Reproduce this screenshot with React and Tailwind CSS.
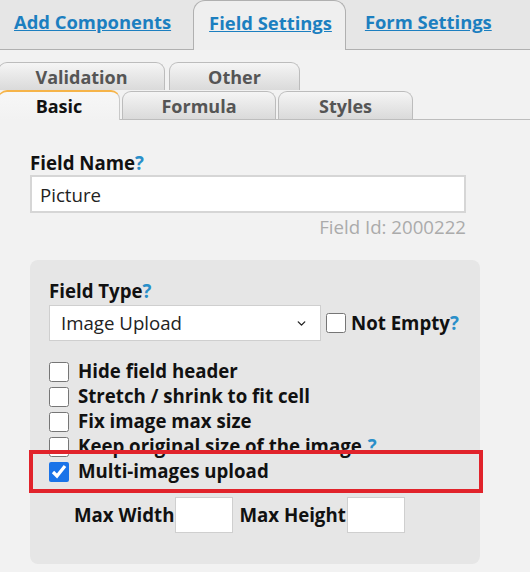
import { ChevronDown } from 'lucide-react';

const font = { fontFamily: "'Open Sans', 'Liberation Sans', sans-serif" };

function Help() {
  return <span className="text-[#2a8fc9]">?</span>;
}

function SubTab({ label, active, className = '' }) {
  return (
    <div
      className={
        'h-[28px] flex items-center justify-center rounded-t-[9px] border border-b-0 text-[18px] font-bold leading-none ' +
        (active
          ? 'border-[#c9c9c9] border-t-2 border-t-[#f6b449] bg-gradient-to-b from-[#f7f7f7] to-[#f2f2f2] text-[#111]'
          : 'border-[#bcbcbc] bg-gradient-to-b from-[#f5f5f5] to-[#dadada] text-[#555]') +
        ' ' +
        className
      }
    >
      {label}
    </div>
  );
}

function Check({ label, checked, help, boxed }) {
  return (
    <div className="relative flex items-center h-[25px]">
      <input
        type="checkbox"
        defaultChecked={checked}
        className="w-[20px] h-[20px] m-0 accent-[#1a73e8]"
      />
      <span className="ml-[9px] text-[18.67px] font-bold text-[#111] leading-none">
        {label}
        {help && <span className="ml-[6px] text-[#2a8fc9]">?</span>}
      </span>
      {boxed && (
        <div className="absolute left-[-20px] right-[-3px] top-[-9px] bottom-[-9px] border-[4px] border-[#e1232b]" />
      )}
    </div>
  );
}

export default function App() {
  return (
    <div className="w-[530px] h-[572px] bg-[#f2f2f2] overflow-hidden" style={font}>
      {/* main tabs */}
      <div className="h-[50px] bg-[#e6e6e6] border-b border-[#b0b0b0] flex items-end pl-[14px]">
        <a href="#" className="h-[49px] pt-[8px] text-[18.4px] font-bold text-[#1c7fc0] underline">
          Add Components
        </a>
        <a
          href="#"
          className="ml-[22px] h-[50px] mb-[-1px] pl-[15px] pr-[13px] pt-[8px] rounded-t-[12px] border border-b-0 border-[#b0b0b0] bg-[#efefef] text-[18.4px] font-bold text-[#1c7fc0] underline"
        >
          Field Settings
        </a>
        <a href="#" className="ml-[19px] h-[49px] pt-[8px] text-[18.4px] font-bold text-[#1c7fc0] underline">
          Form Settings
        </a>
      </div>

      {/* sub tabs */}
      <div className="pt-[12px]">
        <div className="flex">
          <SubTab label="Validation" className="w-[167px] ml-[-2px]" />
          <SubTab label="Other" className="w-[131px] ml-[4px]" />
        </div>
        <div className="flex items-end border-b border-[#bdbdbd]">
          <SubTab label="Basic" active className="w-[122px] ml-[-2px] mb-[-1px] h-[30px]" />
          <SubTab label="Formula" className="w-[154px] ml-[2px]" />
          <SubTab label="Styles" className="w-[135px] ml-[2px]" />
        </div>
      </div>

      <div className="pl-[30px] pr-[50px] pt-[31px]">
        <div className="text-[18.67px] font-bold text-[#111] leading-[24px]">
          Field Name<Help />
        </div>
        <input
          defaultValue="Picture"
          className="w-[436px] h-[38px] bg-white border-2 border-[#d6d6d6] px-[8px] text-[18.67px] text-[#222] outline-none"
        />
        <div className="w-[436px] text-right text-[18.67px] text-[#ababab] leading-[24px] mt-[2px]">
          Field Id: 2000222
        </div>

        {/* panel */}
        <div className="mt-[21px] w-[450px] h-[304px] rounded-[8px] bg-[#e6e6e6] pl-[19px] pt-[19px]">
          <div className="text-[18.67px] font-bold text-[#111] leading-[24px]">
            Field Type<Help />
          </div>
          <div className="mt-[2px] flex items-center">
            <div className="relative w-[272px] h-[36px] bg-white border border-[#cfcfcf]">
              <select className="appearance-none w-full h-full bg-transparent pl-[11px] text-[18.67px] text-[#222] outline-none">
                <option>Image Upload</option>
              </select>
              <ChevronDown
                className="absolute right-[12px] top-[11px] pointer-events-none"
                size={13}
                strokeWidth={2.5}
                color="#222"
              />
            </div>
            <input type="checkbox" className="ml-[5px] w-[20px] h-[20px] m-0" />
            <span className="ml-[5px] text-[18.67px] font-bold text-[#111]">
              Not Empty<Help />
            </span>
          </div>

          <div className="mt-[18px] flex flex-col">
            <Check label="Hide field header" />
            <Check label="Stretch / shrink to fit cell" />
            <Check label="Fix image max size" />
            <Check label="Keep original size of the image" help />
            <Check label="Multi-images upload" checked boxed />
          </div>

          <div className="mt-[13px] ml-[25px] flex items-center text-[18.67px] font-bold text-[#111]">
            <span>Max Width</span>
            <input className="ml-[1px] w-[58px] h-[36px] bg-white border border-[#cfcfcf]" />
            <span className="ml-[6px]">Max Height</span>
            <input className="ml-[1px] w-[58px] h-[36px] bg-white border border-[#cfcfcf]" />
          </div>
        </div>
      </div>
    </div>
  );
}
